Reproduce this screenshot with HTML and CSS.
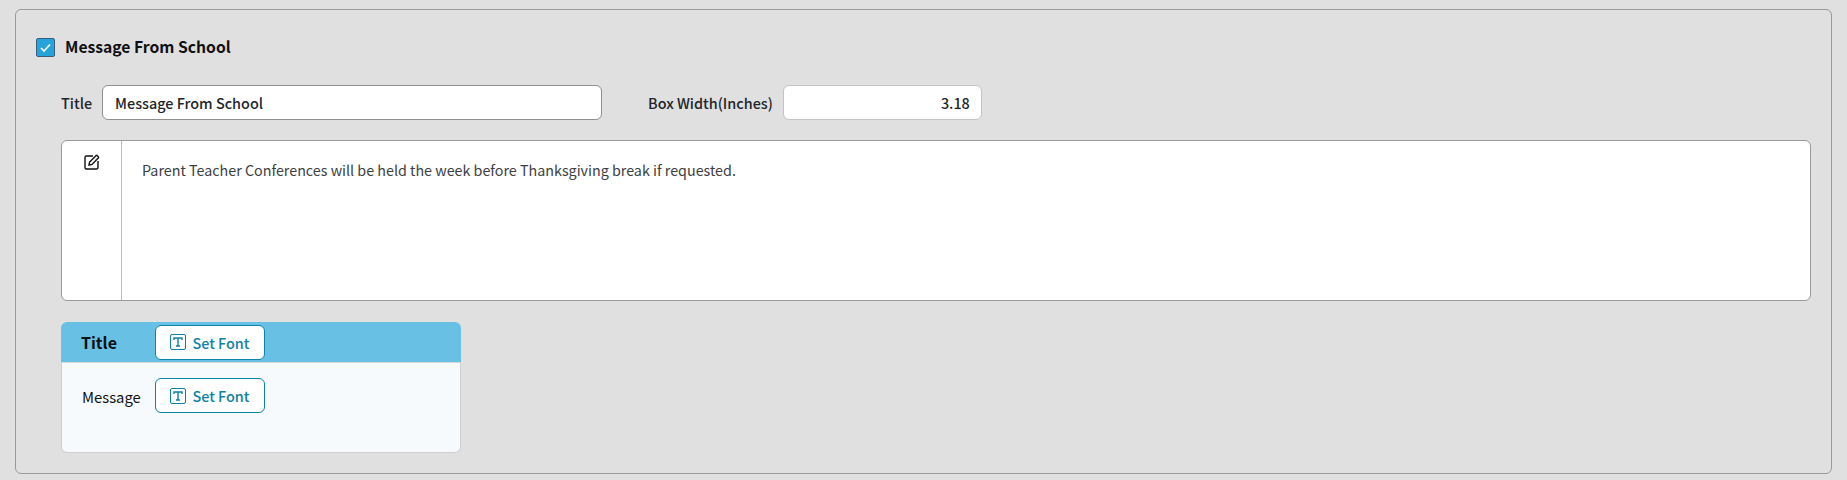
FILE: index.html
```html
<!DOCTYPE html>
<html lang="en">
<head>
    <meta charset="UTF-8">
    <meta name="viewport" content="width=device-width, initial-scale=1.0">
    <title>Message From School</title>
    <link rel="stylesheet" href="styles.css">
</head>
<body>
    <div class="panel">
        <div class="panel-head">
            <span class="check">
                <svg width="13" height="13" viewBox="0 0 13 13"><path d="M2 7l3 3 6-6.500" fill="none" stroke="#fff" stroke-width="1.700"/></svg>
            </span>
            <span class="panel-title">Message From School</span>
        </div>

        <div class="field-row">
            <label class="field-label">Title</label>
            <div class="input title-input">Message From School</div>
            <label class="field-label width-label">Box Width(Inches)</label>
            <div class="input width-input">3.18</div>
        </div>

        <div class="editor">
            <div class="editor-tools">
                <svg width="16" height="16" viewBox="0 0 16 16" fill="none" stroke="#111" stroke-width="1.400">
                    <path d="M9 2H2.500A1.500 1.500 0 0 0 1 3.500v10A1.500 1.500 0 0 0 2.500 15h10a1.500 1.500 0 0 0 1.500-1.500V7"/>
                    <path d="M5 11l.6-2.900 6.300-6.400a1 1 0 0 1 1.400 0l1 1a1 1 0 0 1 0 1.400L8 10.400z"/>
                </svg>
            </div>
            <div class="editor-text">Parent Teacher Conferences will be held the week before Thanksgiving break if requested.</div>
        </div>

        <div class="preview">
            <div class="preview-head">
                <span class="preview-title">Title</span>
                <button class="font-button">
                    <svg width="16" height="16" viewBox="0 0 16 16" fill="none" stroke="#0f82a5"><rect x="0.500" y="0.500" width="15" height="15" rx="1.500"/><path d="M4 6V4h8v2M8 4v8M6 12h4" stroke-width="1.400"/></svg>
                    Set Font
                </button>
            </div>
            <div class="preview-body">
                <span class="preview-label">Message</span>
                <button class="font-button">
                    <svg width="16" height="16" viewBox="0 0 16 16" fill="none" stroke="#0f82a5"><rect x="0.500" y="0.500" width="15" height="15" rx="1.500"/><path d="M4 6V4h8v2M8 4v8M6 12h4" stroke-width="1.400"/></svg>
                    Set Font
                </button>
            </div>
        </div>
    </div>
</body>
</html>
```

FILE: styles.css
```css
body {
    margin: 0;
    padding: 9px 15px 0 15px;
    background: #e0e0e0;
    font-family: "Noto Sans CJK SC", "Noto Sans", sans-serif;
    color: #212529;
}
.panel {
    height: 465px;
    box-sizing: border-box;
    border: 1px solid #9a9a9a;
    border-radius: 6px;
    padding: 27px 20px 0 20px;
}
.panel-head {
    display: flex;
    align-items: center;
    height: 20px;
}
.check {
    width: 19px;
    height: 19px;
    box-sizing: border-box;
    display: flex;
    align-items: center;
    justify-content: center;
    background: #27a3dc;
    border: 1px solid #3a5f7d;
    border-radius: 2px;
}
.panel-title {
    margin-left: 10px;
    font-size: 15.700px;
    line-height: 20px;
    font-weight: 700;
    color: #111;
}
.field-row {
    display: flex;
    align-items: center;
    margin: 28px 0 0 25px;
}
.field-label {
    font-size: 14.400px;
    font-weight: 500;
    line-height: 20px;
}
.input {
    box-sizing: border-box;
    height: 35px;
    line-height: 33px;
    background: #fff;
    border: 1px solid #8f8f8f;
    border-radius: 6px;
    font-size: 14.400px;
}
.title-input {
    width: 500px;
    margin-left: 10px;
    padding-left: 12px;
    font-weight: 500;
}
.width-label {
    margin-left: 46px;
}
.width-input {
    width: 199px;
    margin-left: 10px;
    padding-right: 11px;
    text-align: right;
    border-color: #c4c4c4;
    font-weight: 500;
}
.editor {
    display: flex;
    height: 161px;
    box-sizing: border-box;
    margin: 20px 0 0 25px;
    background: #fff;
    border: 1px solid #9a9a9a;
    border-radius: 6px;
}
.editor-tools {
    width: 60px;
    border-right: 1px solid #a9c0d8;
    display: flex;
    justify-content: center;
    align-items: flex-start;
    padding-top: 13px;
    box-sizing: border-box;
}
.editor-text {
    padding: 17px 20px;
    font-size: 14.300px;
    line-height: 24px;
    color: #3c4043;
}
.preview {
    width: 400px;
    margin: 21px 0 0 25px;
}
.preview-head {
    display: flex;
    align-items: center;
    height: 40px;
    background: #69c0e5;
    border-radius: 6px 6px 0 0;
    padding-left: 20px;
}
.preview-title {
    width: 74px;
    font-size: 16px;
    font-weight: 700;
    color: #111;
}
.preview-body {
    display: flex;
    align-items: flex-start;
    height: 91px;
    box-sizing: border-box;
    padding: 15px 0 0 20px;
    background: #f6fafd;
    border: 1px solid #cfcfcf;
    border-top-color: #d8d8d8;
    border-radius: 0 0 6px 6px;
}
.preview-label {
    width: 73px;
    margin-top: 7px;
    font-size: 14.800px;
    line-height: 24px;
    color: #111;
}
.font-button {
    display: flex;
    align-items: center;
    justify-content: center;
    gap: 6px;
    width: 110px;
    height: 35px;
    padding: 0;
    background: #fff;
    border: 1px solid #0a84a8;
    border-radius: 6px;
    color: #0f82a5;
    font-family: inherit;
    font-size: 14.400px;
    font-weight: 500;
}
```
